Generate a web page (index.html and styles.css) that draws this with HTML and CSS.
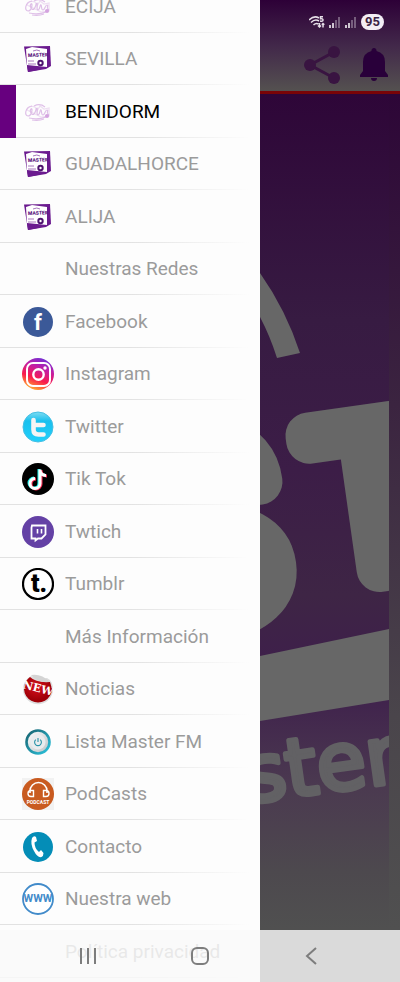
FILE: index.html
```html
<!DOCTYPE html>
<html lang="es">
<head>
    <meta charset="UTF-8">
    <meta name="viewport" content="width=device-width, initial-scale=1.0">
    <title>Master FM</title>
    <link rel="stylesheet" href="styles.css">
</head>
<body>
    <svg class="symbols" aria-hidden="true">
        <symbol id="station" viewBox="0 0 32 32">
            <path d="M2 3.500 28 3 29 23 24 26 6 29z" fill="#6b1b8f"/>
            <path d="M4 6 10 4 25 6 25 24 5 22z" fill="#fff"/>
            <path d="M5 23 24 24.500 16 27 6 29z" fill="#6b1b8f"/>
            <text x="6" y="14" class="tiny-logo" transform="rotate(-2 6 14)">MASTER</text>
            <path d="M11 8q4-2 7 0M6 18h6M6 21h8" stroke="#a877bd" stroke-width="1" fill="none"/>
            <circle cx="18.500" cy="20" r="3.200" fill="#4d136e"/>
            <circle cx="18.500" cy="20" r="1.200" fill="#fff"/>
        </symbol>
        <symbol id="wins" viewBox="0 0 32 32">
            <g fill="none" stroke="#dfc0e8" stroke-width="1.200">
                <path d="M10 10C3 11 2 20 6 20s5-9 3-7 1 7 3 5 2-6 3-6-1 7 1 7 2-6 3-5 0 5 2 5 2-5 4-5-1 3 1 4-1 3-3 2"/>
                <path d="M7 22q9 2 17-1M12 10q6-3 11 1M10 24q7 1 12-1"/>
                <path d="M5 14q2-5 8-3l2 4 3-5 4 3 5-1v8l-8 1z" opacity=".5"/>
            </g>
            <circle cx="25" cy="20" r="2" fill="#d4a3df"/>
        </symbol>
        <linearGradient id="insta" x1=".7" y1="0" x2=".3" y2="1">
            <stop offset="0" stop-color="#6a30d8"/>
            <stop offset=".3" stop-color="#c01fa8"/>
            <stop offset=".65" stop-color="#fa1c4c"/>
            <stop offset="1" stop-color="#ffb52e"/>
        </linearGradient>
        <linearGradient id="sky" x1="0" y1="0" x2="0" y2="1">
            <stop offset="0" stop-color="#7fdcf2"/>
            <stop offset=".3" stop-color="#19c0ee"/>
            <stop offset="1" stop-color="#20d0fb"/>
        </linearGradient>
        <radialGradient id="sticker" cx=".45" cy=".4">
            <stop offset="0" stop-color="#d8101c"/>
            <stop offset="1" stop-color="#a00008"/>
        </radialGradient>
        <linearGradient id="ring" x1="0" y1="0" x2="1" y2="1">
            <stop offset="0" stop-color="#18626f"/>
            <stop offset="1" stop-color="#2cc4de"/>
        </linearGradient>
        <linearGradient id="metal" x1="0" y1="0" x2="1" y2="1">
            <stop offset="0" stop-color="#fff"/>
            <stop offset="1" stop-color="#bcc0c4"/>
        </linearGradient>
    </svg>

    <div class="screen">
        <nav class="drawer">
            <ul class="menu">
                <li><a class="item" href="#"><svg class="icon"><use href="#wins"/></svg>ECIJA</a></li>
                <li><a class="item" href="#"><svg class="icon"><use href="#station"/></svg>SEVILLA</a></li>
                <li><a class="item active" href="#"><svg class="icon"><use href="#wins"/></svg>BENIDORM</a></li>
                <li><a class="item" href="#"><svg class="icon"><use href="#station"/></svg>GUADALHORCE</a></li>
                <li><a class="item" href="#"><svg class="icon"><use href="#station"/></svg>ALIJA</a></li>
                <li><h2 class="item heading">Nuestras Redes</h2></li>
                <li><a class="item" href="#">
                    <svg class="icon" viewBox="0 0 32 32">
                        <circle cx="16" cy="16" r="15" fill="#3b5998"/>
                        <text x="16" y="24" class="mark facebook">f</text>
                    </svg>Facebook</a></li>
                <li><a class="item" href="#">
                    <svg class="icon" viewBox="0 0 32 32">
                        <circle cx="16" cy="16" r="16" fill="url(#insta)"/>
                        <rect x="5" y="5" width="23" height="23" rx="6" fill="none" stroke="#fff" stroke-width="2"/>
                        <circle cx="16.500" cy="16.500" r="5.200" fill="none" stroke="#fff" stroke-width="2.400"/>
                        <circle cx="23" cy="10" r="1.700" fill="#fff"/>
                    </svg>Instagram</a></li>
                <li><a class="item" href="#">
                    <svg class="icon" viewBox="0 0 32 32">
                        <circle cx="16" cy="16" r="15" fill="url(#sky)" stroke="#45bfe4"/>
                        <path d="M11.500 9v9.500q0 5 5 5h5M11.500 14h10" fill="none" stroke="#f4f4f4" stroke-width="4.600" stroke-linecap="round"/>
                    </svg>Twitter</a></li>
                <li><a class="item" href="#">
                    <svg class="icon" viewBox="0 0 32 32">
                        <circle cx="16" cy="16" r="16" fill="#000"/>
                        <g fill="none" stroke-width="3">
                            <path d="M17 6v14a5 5 0 1 1-5-5M17 7q1 5 6 5" stroke="#25f4ee"/>
                            <path d="M19 7v14a5 5 0 1 1-5-5M19 8q1 5 6 5" stroke="#fe2c55"/>
                            <path d="M18 6.500v14a5 5 0 1 1-5-5M18 7.500q1 5 6 5" stroke="#fff"/>
                        </g>
                    </svg>Tik Tok</a></li>
                <li><a class="item" href="#">
                    <svg class="icon" viewBox="0 0 32 32">
                        <circle cx="16" cy="16" r="16" fill="#6441a5"/>
                        <path d="M10 9.500h13.500v9l-4 4h-3.500l-2.500 2v-2H9.500v-11z" fill="none" stroke="#fff" stroke-width="1.800"/>
                        <path d="M15.500 13v4.500M19.500 13v4.500" stroke="#fff" stroke-width="1.600"/>
                    </svg>Twtich</a></li>
                <li><a class="item" href="#">
                    <svg class="icon" viewBox="0 0 32 32">
                        <circle cx="16" cy="16" r="15" fill="#fff" stroke="#000" stroke-width="2.200"/>
                        <text x="17" y="24" class="mark tumblr">t.</text>
                    </svg>Tumblr</a></li>
                <li><h2 class="item heading">Más Información</h2></li>
                <li><a class="item" href="#">
                    <svg class="icon" viewBox="0 0 32 32">
                        <path d="M9 3A15 15 0 1 0 31 16Q31 8 25 5 16 7 9 3z" fill="#ddd"/>
                        <path d="M8 4A14 14 0 1 0 30 16L28 9Q14 10 8 4z" fill="url(#sticker)"/>
                        <path d="M9 2q10-2 19 7-13 1-19-7z" fill="#d4d4d4"/>
                        <text x="16" y="19" class="mark new" transform="rotate(14 16 16)">NEW</text>
                    </svg>Noticias</a></li>
                <li><a class="item" href="#">
                    <svg class="icon" viewBox="0 0 32 32">
                        <circle cx="16" cy="16" r="11.500" fill="url(#metal)" stroke="url(#ring)" stroke-width="2.600"/>
                        <circle cx="16" cy="16" r="7.500" fill="#e9ecee"/>
                        <path d="M13.800 13.600a3.400 3.400 0 1 0 4.400 0M16 12v4" fill="none" stroke="#2a93a8" stroke-width="1.100"/>
                    </svg>Lista Master FM</a></li>
                <li><a class="item" href="#">
                    <svg class="icon" viewBox="0 0 32 32">
                        <path d="M0 0h32v32H0z" fill="#f2f2f2"/>
                        <circle cx="16" cy="16" r="16" fill="#c95b20"/>
                        <path d="M8 15v-2a8.500 8.500 0 0 1 17 0v2" fill="none" stroke="#fff" stroke-width="1.600"/>
                        <g fill="none" stroke="#fff" stroke-width="1.400">
                            <path d="M11.500 12.500v6H9a3 3 0 0 1 0-6zM21.500 12.500v6H24a3 3 0 0 0 0-6z"/>
                        </g>
                        <text x="16" y="26" class="mark podcast">PODCAST</text>
                    </svg>PodCasts</a></li>
                <li><a class="item" href="#">
                    <svg class="icon" viewBox="0 0 32 32">
                        <circle cx="16" cy="16" r="15" fill="#048db7"/>
                        <path d="M10 7q2-3 4-1l1 4-2.500 1.500q0 6 4.500 9.500l2-2 2.500 3q0 3-2 4-4 1-7.500-6-4-7-2-13z" fill="#fff"/>
                    </svg>Contacto</a></li>
                <li><a class="item" href="#">
                    <svg class="icon" viewBox="0 0 32 32">
                        <circle cx="16" cy="16" r="15" fill="#fff" stroke="#428bca" stroke-width="1.800"/>
                        <text x="16" y="19" class="mark www">WWW</text>
                    </svg>Nuestra web</a></li>
                <li><a class="item heading" href="#">Política privacidad</a></li>
            </ul>
        </nav>

        <main class="player">
            <header class="topbar">
                <div class="status">
                    <svg width="16" height="12" viewBox="0 0 16 12" fill="none" stroke="#e6dfe8" stroke-width="1.500">
                        <path d="M0 4q5-5 10-2M2 6.500q4-4 8-1.500M4.500 9Q7 6.500 9.500 8M14 .8h-2.500v2q2.500-.5 2.500 1.200T11 5M10.500 7v4M9 9.500l1.500 1.500 1.500-1.500M14 11.500v-4M12.800 8.800 14 7.500l1.300 1.300"/>
                    </svg>
                    <svg width="12" height="12" viewBox="0 0 12 12">
                        <path d="M1 9v3M4 7v5" stroke="#fff" stroke-width="1.500"/>
                        <path d="M7 4v8M10 1v11" stroke="#8d7893" stroke-width="1.500"/>
                    </svg>
                    <svg width="12" height="12" viewBox="0 0 12 12">
                        <path d="M1 9v3M4 7v5" stroke="#fff" stroke-width="1.500"/>
                        <path d="M7 4v8M10 1v11" stroke="#8d7893" stroke-width="1.500"/>
                    </svg>
                    <span class="battery">95</span>
                </div>
                <div class="actions">
                    <button class="action" aria-label="Compartir">
                        <svg width="36" height="38" viewBox="0 0 36 38" fill="#391441">
                            <path d="M30 6 6 19l24 13" fill="none" stroke="#391441" stroke-width="3"/>
                            <circle cx="30" cy="6" r="6"/><circle cx="6" cy="19" r="6"/><circle cx="30" cy="32" r="6"/>
                        </svg>
                    </button>
                    <button class="action" aria-label="Avisos">
                        <svg width="28" height="34" viewBox="0 0 28 34" fill="#29003a">
                            <path d="M14 0a2.500 2.500 0 0 1 2.500 3Q25 5 25 14v9l3 4v2H0v-2l3-4v-9Q3 5 11.500 3A2.500 2.500 0 0 1 14 0zM11 30h6q0 3-3 3t-3-3z"/>
                        </svg>
                    </button>
                </div>
            </header>
            <svg class="cover" viewBox="260 94 140 888" preserveAspectRatio="xMinYMin slice" aria-hidden="true">
                <defs>
                    <linearGradient id="back" x1="0" y1="0" x2="0" y2="1">
                        <stop offset="0" stop-color="#2d0637"/>
                        <stop offset=".35" stop-color="#3b2440"/>
                        <stop offset=".7" stop-color="#4a454b"/>
                        <stop offset=".94" stop-color="#505050"/>
                    </linearGradient>
                    <linearGradient id="art" x1="0" y1="0" x2="0" y2="1">
                        <stop offset="0" stop-color="#2e0638"/>
                        <stop offset=".27" stop-color="#371b42"/>
                        <stop offset=".45" stop-color="#3c1d47"/>
                        <stop offset=".6" stop-color="#3e2545"/>
                        <stop offset=".7" stop-color="#3e1e4c"/>
                        <stop offset=".83" stop-color="#4b3a50"/>
                        <stop offset=".93" stop-color="#4d494e"/>
                        <stop offset="1" stop-color="#505050"/>
                    </linearGradient>
                    <clipPath id="frame"><path d="M260 94h129v888H260z"/></clipPath>
                </defs>
                <path d="M260 94h140v888H260z" fill="url(#back)"/>
                <g clip-path="url(#frame)" fill="#676767">
                    <path d="M260 94h129v836H260z" fill="url(#art)"/>
                    <path d="M260 273Q286 310 300 353L277 358Q270 336 260 317z"/>
                    <text class="big letter-s" x="143" y="627" transform="rotate(-8 143 627)">S</text>
                    <text class="big" x="323" y="577" transform="rotate(-8 323 577)">T</text>
                    <path d="M260 656 389 629v71L260 721z"/>
                    <text class="small" x="248" y="803" transform="rotate(-8 248 803)">ster</text>
                </g>
            </svg>
        </main>

        <div class="navbar">
            <button aria-label="Recientes">
                <svg width="18" height="18" viewBox="0 0 18 18"><path d="M2 1v16M9 1v16M16 1v16"/></svg>
            </button>
            <button aria-label="Inicio">
                <svg width="18" height="18" viewBox="0 0 18 18"><rect x="1" y="1" width="16" height="16" rx="5"/></svg>
            </button>
            <button aria-label="Atrás">
                <svg width="18" height="18" viewBox="0 0 18 18"><path d="M13 1 4 9l9 8"/></svg>
            </button>
        </div>
    </div>
</body>
</html>
```

FILE: styles.css
```css
* {
    box-sizing: border-box;
}
body {
    margin: 0;
    font-family: Roboto, "Liberation Sans", sans-serif;
    background: #505050;
}
button {
    padding: 0;
    border: none;
    background: none;
    cursor: pointer;
}
svg {
    display: block;
}
.symbols {
    position: absolute;
    width: 0;
    height: 0;
}
.screen {
    position: relative;
    display: flex;
    height: 100vh;
    overflow: hidden;
}

/* drawer, scrolled to its end */
.drawer {
    display: flex;
    flex-direction: column;
    justify-content: flex-end;
    width: 65%;
    padding-bottom: 4px;
    background: #fdfdfd;
}
.menu {
    margin: 0;
    padding: 0;
    list-style: none;
}
.menu li {
    height: 53px;
}
.menu li:nth-child(even) {
    height: 52px;
}
.item {
    display: flex;
    align-items: center;
    gap: 11px;
    height: 100%;
    margin: 0;
    padding-left: 22px;
    font-size: 19px;
    font-weight: 400;
    line-height: 24px;
    color: #9b9b9b;
    text-decoration: none;
    white-space: nowrap;
    background: linear-gradient(to right, #e2e2e2 50%, #fdfdfd 96%) left bottom / 100% 1px no-repeat;
}
.item.active {
    padding-left: 6px;
    border-left: 16px solid #67007f;
    color: #000;
}
.item.heading {
    padding-left: 65px;
}
.icon {
    flex: none;
    width: 32px;
    height: 32px;
}
.mark {
    text-anchor: middle;
    fill: #fff;
    font-weight: 700;
}
.facebook {
    font-size: 22px;
}
.tumblr {
    font-size: 25px;
    font-weight: 900;
    fill: #000;
}
.new {
    font-family: "DejaVu Serif", serif;
    font-size: 11px;
}
.podcast {
    font-size: 5px;
}
.www {
    font-size: 11px;
    fill: #428bca;
}
.tiny-logo {
    font-size: 5px;
    font-weight: 900;
    fill: #5b1780;
}

/* player behind the drawer */
.player {
    display: flex;
    flex-direction: column;
    flex: 1;
    min-width: 0;
}
.topbar {
    padding: 14px 12px 7px;
    background: linear-gradient(#2d0037, #42284a 50%, #545150);
    border-bottom: 3px solid #790407;
}
.status {
    display: flex;
    justify-content: flex-end;
    align-items: center;
    gap: 4px;
    padding-right: 4px;
}
.battery {
    width: 23px;
    border-radius: 8px;
    background: #f3eef5;
    color: #3c2445;
    font-size: 13px;
    font-weight: 700;
    line-height: 16px;
    text-align: center;
}
.actions {
    display: flex;
    justify-content: flex-end;
    align-items: center;
    gap: 20px;
    margin-top: 16px;
}
.cover {
    flex: 1;
    width: 100%;
    min-height: 0;
}
.big {
    font-family: Roboto, sans-serif;
    font-size: 200px;
    font-weight: 100;
    stroke: #676767;
    stroke-width: 46px;
    stroke-linejoin: round;
}
.letter-s {
    font-size: 250px;
}
.small {
    font-family: "DejaVu Sans", sans-serif;
    font-size: 80px;
    fill: #626164;
    stroke: #626164;
    stroke-width: 5px;
    stroke-linejoin: round;
}

/* system navigation bar */
.navbar {
    position: absolute;
    left: 0;
    right: 0;
    bottom: 0;
    display: flex;
    height: 52px;
    padding: 0 32px;
    background: rgba(249, 249, 249, 0.82);
}
.navbar button {
    display: flex;
    flex: 1;
    justify-content: center;
    align-items: center;
}
.navbar svg {
    fill: none;
    stroke: #7d7d7d;
    stroke-width: 2px;
}
```
